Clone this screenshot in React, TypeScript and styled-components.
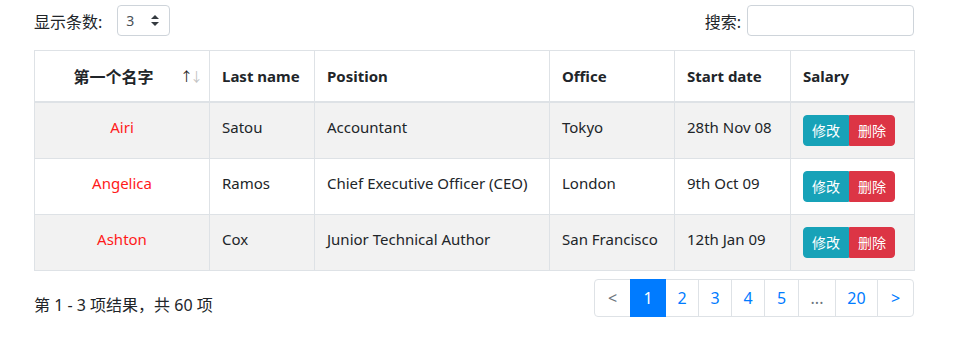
import React, { FC } from 'react';
import styled, { createGlobalStyle } from 'styled-components';

const GlobalStyle = createGlobalStyle`
  body {
    margin: 0;
    background: #fff;
    font-family: "Noto Sans", "Noto Sans CJK SC", sans-serif;
    color: #212529;
    font-size: 16px;
  }
`;

const Page = styled.div`
  width: 880px;
  padding: 5px 0 0 34px;
`;

const Toolbar = styled.div`
  display: flex;
  justify-content: space-between;
  align-items: center;
  height: 31px;
  margin-bottom: 14px;
`;

const Field = styled.label`
  display: flex;
  align-items: center;
  gap: 6px;
  font-size: 16px;
`;

const SizeSelect = styled.div`
  display: flex;
  align-items: center;
  justify-content: space-between;
  box-sizing: border-box;
  width: 53px;
  height: 31px;
  margin-left: 9px;
  padding: 0 10px 0 8px;
  border: 1px solid #ced4da;
  border-radius: 4px;
  font-size: 14px;
  color: #495057;
`;

const SearchInput = styled.input`
  box-sizing: border-box;
  width: 167px;
  height: 31px;
  border: 1px solid #ced4da;
  border-radius: 4px;
  outline: none;
`;

const Table = styled.table`
  width: 880px;
  table-layout: fixed;
  border-collapse: collapse;
  border: 1px solid #dee2e6;
`;

const Th = styled.th<{ $w: number; $sortable?: boolean }>`
  position: relative;
  box-sizing: border-box;
  width: ${p => p.$w}px;
  height: 51px;
  padding: 12px ${p => (p.$sortable ? '29px' : '12px')} 12px 12px;
  border: 1px solid #dee2e6;
  border-bottom: 2px solid #dee2e6;
  text-align: ${p => (p.$sortable ? 'center' : 'left')};
  font-size: 15px;
  font-weight: 700;
`;

const CjkTitle = styled.span`
  font-size: 16px;
`;

const SortIcon = styled.span`
  position: absolute;
  right: 9px;
  top: 15px;
  font-size: 13px;
  font-weight: 400;
  letter-spacing: -3px;
  color: #222;
  & > span {
    color: #c2c2c2;
  }
`;

const Row = styled.tr<{ $striped: boolean }>`
  background: ${p => (p.$striped ? '#f2f2f2' : '#fff')};
`;

const Td = styled.td<{ $name?: boolean }>`
  height: 31px;
  padding: 12px;
  border: 1px solid #dee2e6;
  vertical-align: top;
  line-height: 24px;
  font-size: 15px;
  text-align: ${p => (p.$name ? 'center' : 'left')};
  color: ${p => (p.$name ? '#ff1a1a' : '#212529')};
  white-space: nowrap;
`;

const BtnGroup = styled.div`
  display: inline-flex;
  vertical-align: top;
`;

const ActionButton = styled.button<{ $kind: 'edit' | 'del' }>`
  height: 31px;
  width: 46px;
  padding: 0;
  border: 1px solid ${p => (p.$kind === 'edit' ? '#17a2b8' : '#dc3545')};
  background: ${p => (p.$kind === 'edit' ? '#17a2b8' : '#dc3545')};
  color: #fff;
  font-family: inherit;
  font-size: 14px;
  border-radius: ${p => (p.$kind === 'edit' ? '4px 0 0 4px' : '0 4px 4px 0')};
`;

const Footer = styled.div`
  display: flex;
  justify-content: space-between;
  align-items: flex-start;
  margin-top: 8px;
`;

const Info = styled.div`
  padding-top: 13px;
  font-size: 16px;
`;

const Pager = styled.ul`
  display: flex;
  margin: 0;
  padding: 0;
  list-style: none;
`;

const PageItem = styled.li<{ $active?: boolean; $muted?: boolean; $w: number }>`
  box-sizing: border-box;
  width: ${p => p.$w}px;
  height: 38px;
  display: flex;
  align-items: center;
  justify-content: center;
  margin-left: -1px;
  border: 1px solid ${p => (p.$active ? '#007bff' : '#dee2e6')};
  background: ${p => (p.$active ? '#007bff' : '#fff')};
  color: ${p => (p.$active ? '#fff' : p.$muted ? '#6c757d' : '#007bff')};
  font-size: 16px;
  position: relative;
  z-index: ${p => (p.$active ? 1 : 0)};
  &:first-child {
    margin-left: 0;
    border-radius: 4px 0 0 4px;
  }
  &:last-child {
    border-radius: 0 4px 4px 0;
  }
`;

const rows = [
  ['Airi', 'Satou', 'Accountant', 'Tokyo', '28th Nov 08'],
  ['Angelica', 'Ramos', 'Chief Executive Officer (CEO)', 'London', '9th Oct 09'],
  ['Ashton', 'Cox', 'Junior Technical Author', 'San Francisco', '12th Jan 09'],
];

const pages: { label: string; w: number; active?: boolean; muted?: boolean }[] = [
  { label: '<', w: 37, muted: true },
  { label: '1', w: 36, active: true },
  { label: '2', w: 34 },
  { label: '3', w: 34 },
  { label: '4', w: 34 },
  { label: '5', w: 35 },
  { label: '...', w: 38, muted: true },
  { label: '20', w: 43 },
  { label: '>', w: 37 },
];

const App: FC = () => (
  <Page>
    <GlobalStyle />
    <Toolbar>
      <Field>
        显示条数:
        <SizeSelect>
          3
          <svg width="8" height="11" viewBox="0 0 8 11">
            <path d="M4 0 L8 4 L0 4 Z M0 7 L8 7 L4 11 Z" fill="#343a40" />
          </svg>
        </SizeSelect>
      </Field>
      <Field>
        搜索:
        <SearchInput type="text" />
      </Field>
    </Toolbar>
    <Table>
      <thead>
        <tr>
          <Th $w={175} $sortable>
            <CjkTitle>第一个名字</CjkTitle>
            <SortIcon>
              ↑<span>↓</span>
            </SortIcon>
          </Th>
          <Th $w={105}>Last name</Th>
          <Th $w={235}>Position</Th>
          <Th $w={125}>Office</Th>
          <Th $w={116}>Start date</Th>
          <Th $w={124}>Salary</Th>
        </tr>
      </thead>
      <tbody>
        {rows.map((r, i) => (
          <Row key={r[0]} $striped={i % 2 === 0}>
            <Td $name>{r[0]}</Td>
            <Td>{r[1]}</Td>
            <Td>{r[2]}</Td>
            <Td>{r[3]}</Td>
            <Td>{r[4]}</Td>
            <Td>
              <BtnGroup>
                <ActionButton $kind="edit">修改</ActionButton>
                <ActionButton $kind="del">删除</ActionButton>
              </BtnGroup>
            </Td>
          </Row>
        ))}
      </tbody>
    </Table>
    <Footer>
      <Info>第 1 - 3 项结果，共 60 项</Info>
      <Pager>
        {pages.map(p => (
          <PageItem key={p.label} $w={p.w} $active={p.active} $muted={p.muted}>
            {p.label}
          </PageItem>
        ))}
      </Pager>
    </Footer>
  </Page>
);

export default App;
